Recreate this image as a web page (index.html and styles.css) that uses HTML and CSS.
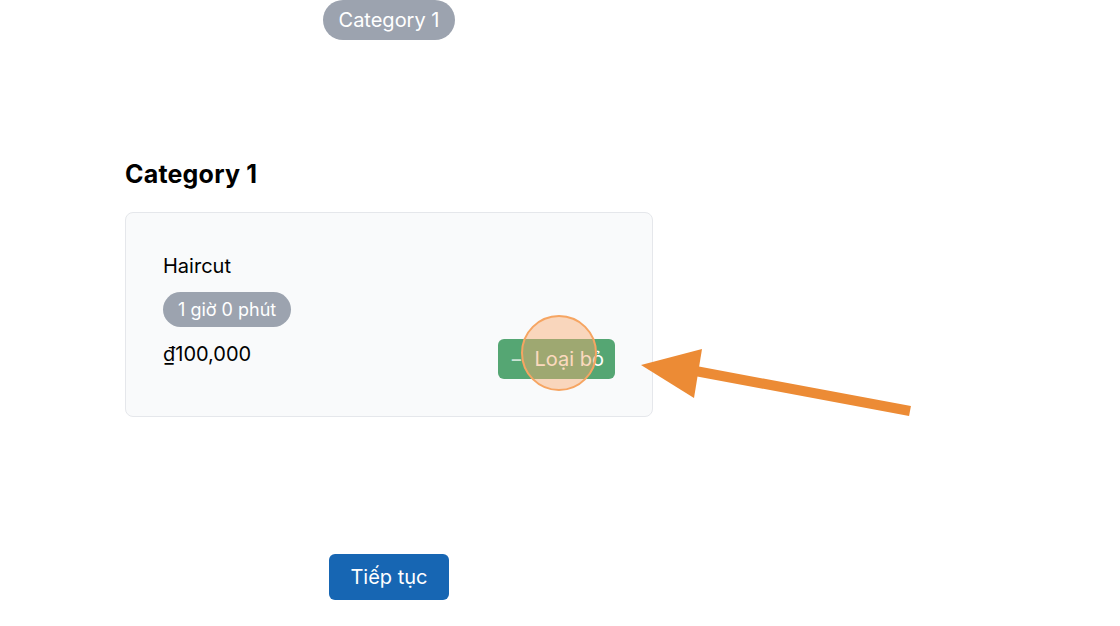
FILE: index.html
```html
<!DOCTYPE html>
<html lang="vi">
<head>
    <meta charset="UTF-8">
    <meta name="viewport" content="width=device-width, initial-scale=1.0">
    <title>Chọn dịch vụ</title>
    <link rel="stylesheet" href="styles.css">
</head>
<body>
    <div class="page">
        <span class="category-pill">Category 1</span>

        <h2 class="category-title">Category 1</h2>

        <div class="service-card">
            <div class="service-name">Haircut</div>
            <span class="duration">1 giờ 0 phút</span>
            <div class="service-row">
                <span class="price">₫100,000</span>
                <button class="remove-btn"><span class="minus">−</span> Loại bỏ</button>
            </div>
        </div>

        <button class="next-btn">Tiếp tục</button>
    </div>

    <!-- click highlight + arrow annotation -->
    <div class="click-mark"></div>
    <svg class="arrow" width="1120" height="626" viewBox="0 0 1120 626">
        <line x1="910" y1="411" x2="690" y2="370" stroke="#ec8b35" stroke-width="10"/>
        <polygon points="641,365 702,349 694,398" fill="#ec8b35"/>
    </svg>
</body>
</html>
```

FILE: styles.css
```css
body {
    font-family: Inter, 'Noto Sans', sans-serif;
    margin: 0;
    background-color: #ffffff;
    color: #111111;
}

.page {
    width: 528px;
    margin-left: 125px;
    display: flex;
    flex-direction: column;
}

.category-pill {
    align-self: center;
    height: 40px;
    line-height: 40px;
    padding: 0 16px;
    background-color: #9ca3af;
    color: #ffffff;
    border-radius: 20px;
    font-size: 20px;
}

.category-title {
    margin: 118px 0 22px;
    font-size: 25px;
    line-height: 32px;
    font-weight: 700;
    letter-spacing: 0.2px;
    color: #000000;
}

.service-card {
    background-color: #f9fafb;
    border: 1px solid #e5e7eb;
    border-radius: 8px;
    padding: 39px 37px 37px;
    display: flex;
    flex-direction: column;
    align-items: flex-start;
}

.service-name {
    font-size: 20px;
    line-height: 28px;
    color: #000000;
}

.duration {
    margin-top: 12px;
    height: 35px;
    line-height: 35px;
    padding: 0 15px;
    background-color: #9ca3af;
    color: #ffffff;
    border-radius: 18px;
    font-size: 18px;
}

.service-row {
    margin-top: 12px;
    width: 100%;
    display: flex;
    justify-content: space-between;
    align-items: flex-start;
}

.price {
    font-size: 20px;
    line-height: 30px;
    color: #000000;
}

.remove-btn {
    height: 40px;
    padding: 0 11px 0 12px;
    background-color: #55a673;
    color: #ffffff;
    border: none;
    border-radius: 6px;
    font-family: inherit;
    font-size: 20px;
    cursor: pointer;
}

.minus {
    opacity: 0.7;
    margin-right: 6px;
}

.next-btn {
    align-self: center;
    margin-top: 137px;
    height: 46px;
    padding: 0 21px;
    background-color: #1766b3;
    color: #ffffff;
    border: none;
    border-radius: 6px;
    font-family: inherit;
    font-size: 20px;
    cursor: pointer;
}

.click-mark {
    position: absolute;
    left: 521px;
    top: 315px;
    width: 72px;
    height: 72px;
    border-radius: 50%;
    border: 2px solid #f6a562;
    background-color: rgba(249, 170, 110, 0.45);
}

.arrow {
    position: absolute;
    left: 0;
    top: 0;
    pointer-events: none;
}
```
